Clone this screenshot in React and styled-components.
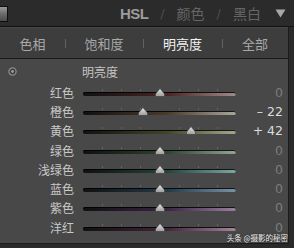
import React from "react";
import styled, { createGlobalStyle } from "styled-components";

const Global = createGlobalStyle`
  html, body { margin: 0; padding: 0; background: #2a2a2a; }
  body { font-family: "Noto Sans CJK SC", "Noto Sans", sans-serif; }
`;

const Root = styled.div`
  position: relative;
  width: 294px;
  height: 248px;
  background: #2a2a2a;
  overflow: hidden;
`;

const Header = styled.div`
  height: 27px;
  display: flex;
  align-items: center;
  justify-content: space-between;
  border-bottom: 1px solid #111;
  background: #2b2b2b;
  box-sizing: border-box;
`;

const Thumb = styled.div`
  width: 8px;
  height: 16px;
  box-sizing: border-box;
  border: 1px solid #0e0e0e;
  border-left: none;
  background: linear-gradient(180deg, #9a9a9a 0%, #6a6a6a 50%, #4a4a4a 100%);
  margin-top: 1px;
`;

const ModeGroup = styled.div`
  display: flex;
  align-items: center;
  gap: 12px;
  padding-right: 8px;
`;

const Mode = styled.span`
  font-family: ${(p) => (p.$latin ? '"Liberation Sans", sans-serif' : '"Noto Sans CJK SC", sans-serif')};
  font-size: ${(p) => (p.$latin ? "15px" : "14px")};
  font-weight: ${(p) => (p.$latin ? 700 : 400)};
  letter-spacing: ${(p) => (p.$latin ? "-0.6px" : "0")};
  color: ${(p) => (p.$active ? "#9c9c9c" : "#666666")};
  line-height: 1;
`;

const Slash = styled.span`
  font-family: "DejaVu Sans", sans-serif;
  font-size: 13px;
  color: #4e4e4e;
  line-height: 1;
`;

const Caret = styled.svg`
  width: 11px;
  height: 9px;
  margin-left: 2px;
`;

const Panel = styled.div`
  width: 289px;
  height: 217px;
  box-sizing: border-box;
  border-right: 1px solid #1c1c1c;
  border-bottom: 1px solid #1c1c1c;
  background: #484848;
  display: flex;
  flex-direction: column;
`;

const Tabs = styled.div`
  height: 32px;
  display: grid;
  grid-template-columns: 65px 78px 79px 1fr;
  background: #3d3d3d;
  border-top: 1px solid #474747;
  border-bottom: 1px solid #1a1a1a;
  box-sizing: border-box;
`;

const Tab = styled.div`
  position: relative;
  display: flex;
  align-items: center;
  justify-content: center;
  font-size: 13px;
  color: ${(p) => (p.$active ? "#f2f2f2" : "#a8a8a8")};
  &::before {
    content: "";
    display: ${(p) => (p.$first ? "none" : "block")};
    position: absolute;
    left: 0;
    top: 11px;
    width: 1px;
    height: 9px;
    background: #626262;
  }
`;

const Body = styled.div`
  flex: 1;
  display: flex;
  flex-direction: column;
`;

const TitleRow = styled.div`
  height: 23px;
  padding-top: 1px;
  display: flex;
  align-items: center;
`;

const IconBox = styled.div`
  width: 82px;
  padding-left: 8px;
  box-sizing: border-box;
  display: flex;
  align-items: center;
`;

const Title = styled.div`
  font-size: 12px;
  color: #c4c4c4;
  line-height: 1;
`;

const Row = styled.div`
  height: 19.3px;
  display: grid;
  grid-template-columns: 74px 153px 38px;
  column-gap: 9px;
  align-items: center;
`;

const Label = styled.div`
  text-align: right;
  font-size: 12px;
  color: #c8c8c8;
  line-height: 1;
`;

const Track = styled.div`
  position: relative;
  height: 4px;
  margin-top: 2px;
  border-radius: 2px;
  background: linear-gradient(90deg, #111 0%, ${(p) => p.$mid} 55%, ${(p) => p.$end} 100%);
  box-shadow: inset 0 1px 0 rgba(0, 0, 0, 0.85);
`;

const Tick = styled.span`
  position: absolute;
  bottom: 5px;
  width: 1px;
  height: 2px;
  background: rgba(120, 120, 120, 0.6);
`;

const Knob = styled.svg`
  position: absolute;
  bottom: -1px;
  width: 10px;
  height: 9px;
  margin-left: -5px;
`;

const Value = styled.div`
  text-align: right;
  font-family: "DejaVu Sans", sans-serif;
  font-size: 12.5px;
  color: ${(p) => (p.$set ? "#dcdcdc" : "#7c7c7c")};
  line-height: 10px;
  white-space: pre;
`;

const Watermark = styled.div`
  position: absolute;
  right: 6px;
  bottom: 6px;
  font-size: 7.5px;
  color: #f4f4f4;
  line-height: 8px;
  text-shadow: 0 0 2px rgba(0, 0, 0, 0.8);
  white-space: nowrap;
`;

const rows = [
  { name: "红色", v: 0, mid: "#4a2424", end: "#a08a8a" },
  { name: "橙色", v: -22, mid: "#4a3a2c", end: "#a8a898" },
  { name: "黄色", v: 42, mid: "#444428", end: "#a4a888" },
  { name: "绿色", v: 0, mid: "#2c4430", end: "#94a494" },
  { name: "浅绿色", v: 0, mid: "#22443e", end: "#7ca8a0" },
  { name: "蓝色", v: 0, mid: "#223a48", end: "#7894a4" },
  { name: "紫色", v: 0, mid: "#3a2444", end: "#9a80a0" },
  { name: "洋红", v: 0, mid: "#44243a", end: "#a4849a" },
];

const fmt = (v) => (v === 0 ? "0" : v < 0 ? `– ${-v}` : `+ ${v}`);

function Slider({ value, mid, end }) {
  const pct = 50 + (value / 2) * 0.98;
  return (
    <Track $mid={mid} $end={end}>
      {[12.5, 25, 37.5, 62.5, 75, 87.5].map((t) => (
        <Tick key={t} style={{ left: `${t}%` }} />
      ))}
      <Knob viewBox="0 0 10 9" style={{ left: `${pct}%` }}>
        <defs>
          <linearGradient id="kg" x1="0" y1="0" x2="0" y2="1">
            <stop offset="0" stopColor="#e8e8e8" />
            <stop offset="1" stopColor="#9a9a9a" />
          </linearGradient>
        </defs>
        <path d="M5 0.5 L9.5 6 L9.5 8.5 L0.5 8.5 L0.5 6 Z" fill="url(#kg)" stroke="#3a3a3a" strokeWidth="0.6" />
      </Knob>
    </Track>
  );
}

export default function App() {
  return (
    <Root>
      <Global />
      <Header>
        <Thumb />
        <ModeGroup>
          <Mode $latin $active>HSL</Mode>
          <Slash>/</Slash>
          <Mode>颜色</Mode>
          <Slash>/</Slash>
          <Mode>黑白</Mode>
          <Caret viewBox="0 0 11 9">
            <path d="M0.5 0.5 L10.5 0.5 L5.5 8.5 Z" fill="#a8a8a8" />
          </Caret>
        </ModeGroup>
      </Header>
      <Panel>
        <Tabs>
          <Tab $first>色相</Tab>
          <Tab>饱和度</Tab>
          <Tab $active>明亮度</Tab>
          <Tab>全部</Tab>
        </Tabs>
        <Body>
          <TitleRow>
            <IconBox>
              <svg width="9" height="9" viewBox="0 0 9 9">
                <circle cx="4.5" cy="4.5" r="3.6" fill="#3c3c3c" stroke="#8c8c8c" strokeWidth="1.3" />
                <circle cx="4.5" cy="4.5" r="1.4" fill="#a0a0a0" />
              </svg>
            </IconBox>
            <Title>明亮度</Title>
          </TitleRow>
          {rows.map((r) => (
            <Row key={r.name}>
              <Label>{r.name}</Label>
              <Slider value={r.v} mid={r.mid} end={r.end} />
              <Value $set={r.v !== 0}>{fmt(r.v)}</Value>
            </Row>
          ))}
        </Body>
      </Panel>
      <Watermark>头条 @摄影的秘密</Watermark>
    </Root>
  );
}
